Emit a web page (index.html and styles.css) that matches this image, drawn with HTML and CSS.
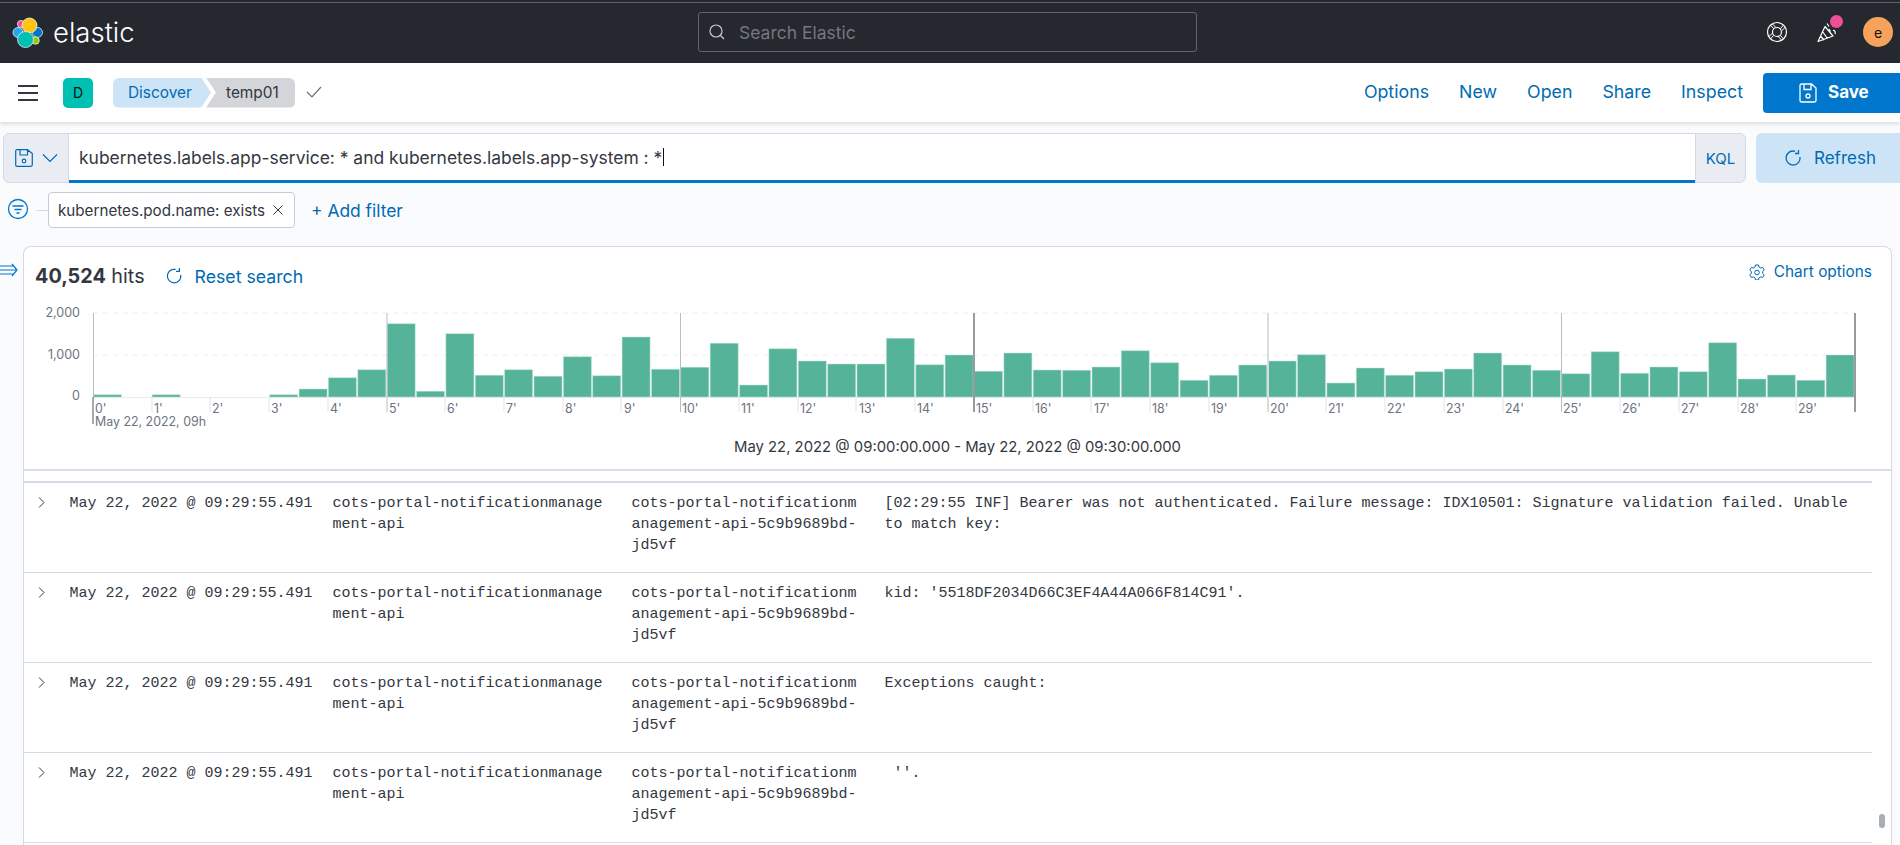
FILE: index.html
```html
<!DOCTYPE html>
<html lang="en">
<head>
<meta charset="utf-8">
<title>Discover - Elastic</title>
<link rel="stylesheet" href="styles.css">
</head>
<body>
<div class="strip"></div>
<header class="topbar">
  <div class="brand">
    <svg class="logo" viewBox="0 0 32 32" width="32" height="32">
      <circle class="l-pink" cx="9" cy="7" r="3.6"/>
      <circle class="l-sky" cx="6" cy="15.5" r="5"/>
      <circle class="l-blue" cx="25.5" cy="15.5" r="5"/>
      <circle class="l-green" cx="23.5" cy="23.5" r="3.8"/>
      <circle class="l-yellow" cx="17.5" cy="8.5" r="7.5"/>
      <circle class="l-teal" cx="13.5" cy="22.5" r="8"/>
    </svg>
    <span class="wordmark">elastic</span>
  </div>
  <div class="search">
    <svg class="search-icon" viewBox="0 0 16 16" width="16" height="16"><circle cx="7" cy="7" r="6"/><path d="M11.5 11.5l3.5 3.5"/></svg>
    <span class="search-text">Search Elastic</span>
  </div>
  <div class="top-icons">
    <svg class="lifebuoy" viewBox="0 0 22 22" width="22" height="22"><circle cx="11" cy="11" r="9.5"/><circle cx="11" cy="11" r="4.5"/><path d="M4.5 4l3.2 3.8M6.5 2.8l3 3.4M17.5 4l-3.2 3.8M19.2 6.5l-3.4 3M4.5 18l3.2-3.8M2.8 15.5l3.4-3M17.5 18l-3.2-3.8M15.5 19.2l-3-3.4"/></svg>
    <span class="cheer">
      <svg viewBox="0 0 22 24" width="22" height="24"><path d="M2 21.5l7-15 8 9.5zM6.5 11.5l5 7M4.5 16l3.5 4M11 3.5l2 3M13 9l1.500 2.500M16 6c2 0 2.500-1 3-2M17 10.500c2-.5 2.500 2 2 3.500"/></svg>
      <span class="cheer-dot"></span>
    </span>
    <span class="avatar">e</span>
  </div>
</header>
<nav class="appbar">
  <span class="burger"><i></i><i></i><i></i></span>
  <span class="tile">D</span>
  <span class="crumb crumb-first">Discover</span>
  <span class="crumb crumb-last">temp01</span>
  <svg class="check" viewBox="0 0 16 12" width="16" height="12"><path d="M1 6l5 5 9-10"/></svg>
  <div class="links">
    <a class="link">Options</a>
    <a class="link">New</a>
    <a class="link">Open</a>
    <a class="link">Share</a>
    <a class="link">Inspect</a>
    <button class="save">
      <svg class="save-icon" viewBox="0 0 18 20" width="18" height="20"><path d="M2.500 1h10l4.500 4v12.500a1.500 1.500 0 0 1-1.500 1.500h-13a1.500 1.500 0 0 1-1.500-1.500v-15a1.500 1.500 0 0 1 1.500-1.500zM5 1v5.500h7V1"/><circle cx="9" cy="13" r="2"/></svg>
      <span class="save-text">Save</span>
    </button>
  </div>
</nav>
<section class="querybar">
  <div class="query">
    <div class="prepend">
      <svg class="q-save" viewBox="0 0 18 18" width="18" height="18"><path d="M2 .7h10.500L17.300 4.500v11.300a1.500 1.500 0 0 1-1.500 1.500H2a1.300 1.300 0 0 1-1.300-1.300V2A1.300 1.300 0 0 1 2 .7zM5 .7v5.300h7.500V.7"/><circle cx="9" cy="12" r="1.800"/></svg>
      <svg class="q-chev" viewBox="0 0 16 10" width="16" height="10"><path d="M1 1.500l7 7 7-7"/></svg>
    </div>
    <div class="input"><span class="q-text">kubernetes.labels.app-service: * and kubernetes.labels.app-system : *</span><span class="caret"></span></div>
    <div class="kql">KQL</div>
  </div>
  <button class="refresh">
    <svg class="refresh-icon" viewBox="0 0 18 18" width="18" height="18"><path d="M11 2.300A7 7 0 1 0 16 8M14.500 1v3.500H11"/></svg>
    Refresh
  </button>
</section>
<section class="filterbar">
  <svg class="filter-icon" viewBox="0 0 22 22" width="22" height="22"><circle cx="11" cy="11" r="9.500"/><path d="M5.500 8h11M7.500 11.500h7M9.500 15h3"/></svg>
  <span class="filter-line"></span>
  <span class="pill">kubernetes.pod.name: exists
    <svg class="pill-x" viewBox="0 0 10 10" width="10" height="10"><path d="M.5.500l9 9M9.500.500l-9 9"/></svg>
  </span>
  <a class="add-filter">+ Add filter</a>
</section>
<svg class="collapse" viewBox="0 0 18 14" width="18" height="14"><path d="M-4 3h17M-4 7h20M-4 11h17M12 1l5 6-5 6"/></svg>
<main class="card">
  <div class="card-head">
    <div class="hits-wrap">
      <span class="hits"><b>40,524</b> hits</span>
      <svg class="reset-icon" viewBox="0 0 16 16" width="18" height="18"><path d="M9.500 2.200A6 6 0 1 0 14 7M12.800 .8v3h-3"/></svg>
      <a class="reset">Reset search</a>
    </div>
    <a class="chart-options">
      <svg class="gear" viewBox="0 0 16 16" width="16" height="16"><path d="M6.500 1h3l.5 2 1.700 1 2-.6 1.500 2.600-1.500 1.500v1.900l1.500 1.500-1.500 2.600-2-.6-1.700 1-.5 2h-3l-.5-2-1.700-1-2 .6L.8 10.900l1.500-1.500V7.500L.8 6l1.500-2.600 2 .6 1.700-1z"/><circle cx="8" cy="8.500" r="2.300"/></svg>
      Chart options
    </a>
  </div>
  <svg class="chart" viewBox="24 300 1867 135" width="1867" height="135">
    <path class="grid" d="M93 313H1855M93 355H1855"/>
    <path class="base" d="M93 397.500H1855"/>
    <path class="ticks" d="M152 397v15M210 397v15M269 397v15M328 397v15M445 397v15M504 397v15M563 397v15M621 397v15M739 397v15M798 397v15M856 397v15M915 397v15M1033 397v15M1091 397v15M1150 397v15M1209 397v15M1326 397v15M1385 397v15M1444 397v15M1503 397v15M1620 397v15M1679 397v15M1738 397v15M1796 397v15"/>
    <path class="bars" d="M93.500 397v-2.300h28v2.300zM152.200 397v-2.300h28v2.300zM269.700 397v-2.300h28v2.300zM299.100 397v-8h28v8zM328.400 397v-19.300h28v19.300zM357.800 397v-27.300h28v27.300zM387.200 397v-73.300h28v73.300zM416.500 397v-5.700h28v5.700zM445.900 397v-63.300h28v63.300zM475.300 397v-21.700h28v21.700zM504.600 397v-27.300h28v27.300zM534 397v-20.700h28v20.700zM563.400 397v-40.300h28v40.300zM592.700 397v-21.300h28v21.300zM622.100 397v-60h28v60zM651.500 397v-27.700h28v27.700zM680.800 397v-29.700h28v29.700zM710.200 397v-53.700h28v53.700zM739.600 397v-12h28v12zM768.900 397v-48.300h28v48.300zM798.300 397v-36h28v36zM827.700 397v-33h28v33zM857 397v-33h28v33zM886.400 397v-58.700h28v58.700zM915.800 397v-32.300h28v32.300zM945.100 397v-42h28v42zM974.500 397v-25.700h28v25.700zM1003.900 397v-44h28v44zM1033.200 397v-27h28v27zM1062.600 397v-26.700h28v26.700zM1092 397v-30h28v30zM1121.300 397v-46.300h28v46.300zM1150.700 397v-34.300h28v34.300zM1180.100 397v-16.700h28v16.700zM1209.400 397v-21.700h28v21.700zM1238.800 397v-32h28v32zM1268.200 397v-36h28v36zM1297.500 397v-42.300h28v42.300zM1326.900 397v-14h28v14zM1356.300 397v-29h28v29zM1385.600 397v-21.700h28v21.700zM1415 397v-25.300h28v25.300zM1444.400 397v-28h28v28zM1473.700 397v-44h28v44zM1503.100 397v-32h28v32zM1532.500 397v-26.700h28v26.700zM1561.800 397v-23.300h28v23.300zM1591.200 397v-45.300h28v45.300zM1620.600 397v-23.700h28v23.700zM1649.900 397v-30h28v30zM1679.300 397v-25.300h28v25.300zM1708.700 397v-54.300h28v54.300zM1738 397v-18h28v18zM1767.400 397v-22h28v22zM1796.800 397v-16.700h28v16.700zM1826.100 397v-42h27.900v42z"/>
    <path class="axis" d="M93.500 313V397"/>
    <path class="major" d="M387 313v99"/>
    <path class="major" d="M680.500 313v99"/>
    <path class="major-strong" d="M974 313v99"/>
    <path class="major-pale" d="M1268 313v99"/>
    <path class="major" d="M1561.500 313v99"/>
    <path class="major-strong" d="M1855 313v99"/>
    <path class="first-tick" d="M93 397v27"/>
    <g class="y-labels">
      <text x="80" y="317">2,000</text>
      <text x="80" y="359">1,000</text>
      <text x="80" y="400">0</text>
    </g>
    <g class="x-labels">
      <text x="95" y="413">0'</text><text x="154" y="413">1'</text><text x="212" y="413">2'</text><text x="271" y="413">3'</text><text x="330" y="413">4'</text><text x="389" y="413">5'</text><text x="447" y="413">6'</text><text x="506" y="413">7'</text><text x="565" y="413">8'</text><text x="624" y="413">9'</text>
      <text x="682" y="413">10'</text><text x="741" y="413">11'</text><text x="800" y="413">12'</text><text x="859" y="413">13'</text><text x="917" y="413">14'</text><text x="976" y="413">15'</text><text x="1035" y="413">16'</text><text x="1094" y="413">17'</text><text x="1152" y="413">18'</text><text x="1211" y="413">19'</text>
      <text x="1270" y="413">20'</text><text x="1328" y="413">21'</text><text x="1387" y="413">22'</text><text x="1446" y="413">23'</text><text x="1505" y="413">24'</text><text x="1563" y="413">25'</text><text x="1622" y="413">26'</text><text x="1681" y="413">27'</text><text x="1740" y="413">28'</text><text x="1798" y="413">29'</text>
      <text x="95" y="426">May 22, 2022, 09h</text>
    </g>
  </svg>
  <div class="range">May 22, 2022 @ 09:00:00.000 - May 22, 2022 @ 09:30:00.000</div>
  <div class="docs">
    <div class="row">
      <svg class="chev" viewBox="0 0 7 11" width="7" height="11"><path d="M1 .5l5 5-5 5"/></svg>
      <div class="cell">May 22, 2022 @ 09:29:55.491</div>
      <div class="cell cell-app">cots-portal-notificationmanagement-api</div>
      <div class="cell cell-pod">cots-portal-notificationmanagement-api-5c9b9689bd-jd5vf</div>
      <div class="cell cell-msg">[02:29:55 INF] Bearer was not authenticated. Failure message: IDX10501: Signature validation failed. Unable to match key:</div>
    </div>
    <div class="row">
      <svg class="chev" viewBox="0 0 7 11" width="7" height="11"><path d="M1 .5l5 5-5 5"/></svg>
      <div class="cell">May 22, 2022 @ 09:29:55.491</div>
      <div class="cell cell-app">cots-portal-notificationmanagement-api</div>
      <div class="cell cell-pod">cots-portal-notificationmanagement-api-5c9b9689bd-jd5vf</div>
      <div class="cell cell-msg">kid: '5518DF2034D66C3EF4A44A066F814C91'.</div>
    </div>
    <div class="row">
      <svg class="chev" viewBox="0 0 7 11" width="7" height="11"><path d="M1 .5l5 5-5 5"/></svg>
      <div class="cell">May 22, 2022 @ 09:29:55.491</div>
      <div class="cell cell-app">cots-portal-notificationmanagement-api</div>
      <div class="cell cell-pod">cots-portal-notificationmanagement-api-5c9b9689bd-jd5vf</div>
      <div class="cell cell-msg">Exceptions caught:</div>
    </div>
    <div class="row">
      <svg class="chev" viewBox="0 0 7 11" width="7" height="11"><path d="M1 .5l5 5-5 5"/></svg>
      <div class="cell">May 22, 2022 @ 09:29:55.491</div>
      <div class="cell cell-app">cots-portal-notificationmanagement-api</div>
      <div class="cell cell-pod">cots-portal-notificationmanagement-api-5c9b9689bd-jd5vf</div>
      <div class="cell cell-msg"> ''.</div>
    </div>
  </div>
  <span class="scroll-thumb"></span>
</main>
</body>
</html>
```

FILE: styles.css
```css
* { box-sizing: border-box; }
html, body { margin: 0; height: 845px; overflow: hidden; }
body {
  position: relative;
  width: 1900px;
  background: #fafbfd;
  font-family: Inter, "Liberation Sans", sans-serif;
  color: #343741;
}
svg { display: block; flex: none; }
svg path, svg circle { fill: none; }

.strip { height: 3px; background: #25282f; border-bottom: 1px solid #62646a; }

.topbar {
  height: 60px;
  background: #25282f;
  display: grid;
  grid-template-columns: 698px 499px 1fr;
  align-items: center;
}
.brand { display: flex; align-items: center; padding-left: 12px; gap: 9px; }
.logo circle { stroke: #fff; stroke-width: .7; }
.logo .l-pink { fill: #f04e98; }
.logo .l-sky { fill: #1ba9f5; }
.logo .l-blue { fill: #0077cc; }
.logo .l-green { fill: #93c90e; }
.logo .l-yellow { fill: #fec514; }
.logo .l-teal { fill: #00bfb3; }
.wordmark { color: #fff; font-size: 27.500px; font-weight: 300; line-height: 1; }

.search {
  height: 40px;
  margin-top: -3px;
  border: 1px solid #62656b;
  border-radius: 3px;
  display: flex;
  align-items: center;
  padding-left: 10px;
  gap: 14px;
}
.search-icon circle, .search-icon path { stroke: #c9ccd1; stroke-width: 1.200; }
.search-text { color: #74777e; font-size: 17.500px; padding-top: 1px; }

.top-icons { display: flex; align-items: center; justify-content: flex-end; padding-right: 7px; margin-top: -2px; }
.lifebuoy { margin-right: 28px; }
.lifebuoy circle, .lifebuoy path { stroke: #fff; stroke-width: 1.200; }
.lifebuoy path { stroke-width: 1; }
.cheer { position: relative; display: block; margin-right: 25px; }
.cheer path { stroke: #fff; stroke-width: 1.200; stroke-linejoin: round; }
.cheer-dot {
  position: absolute;
  top: -5px;
  left: 14px;
  width: 13px;
  height: 13px;
  border-radius: 50%;
  background: #f04e98;
}
.avatar {
  width: 30px;
  height: 30px;
  border-radius: 50%;
  background: #f5a35c;
  color: #111;
  font-size: 14px;
  display: flex;
  align-items: center;
  justify-content: center;
}

.appbar {
  position: relative;
  height: 59px;
  background: #fff;
  box-shadow: 0 2px 4px rgba(52, 55, 65, .16);
  display: flex;
  align-items: center;
}
.burger { width: 20px; margin-left: 18px; display: flex; flex-direction: column; gap: 5px; }
.burger i { display: block; height: 2px; background: #343741; }
.tile {
  width: 30px;
  height: 30px;
  margin-left: 25px;
  border-radius: 5px;
  background: #00bfb3;
  color: #111;
  font-size: 14px;
  display: flex;
  align-items: center;
  justify-content: center;
}
.crumb { height: 30px; display: flex; align-items: center; font-size: 15.400px; }
.crumb-first {
  width: 98px;
  margin-left: 20px;
  padding-left: 15px;
  background: #cce4f5;
  color: #006bb4;
  border-radius: 6px 0 0 6px;
  clip-path: polygon(0 0, 90% 0, 100% 50%, 90% 100%, 0 100%);
}
.crumb-last {
  width: 89px;
  margin-left: -5px;
  padding-left: 20px;
  background: #d3d5d9;
  color: #343741;
  border-radius: 0 6px 6px 0;
  clip-path: polygon(0 0, 100% 0, 100% 100%, 0 100%, 10px 50%);
}
.check { margin: -2px 0 0 11px; }
.check path { stroke: #69707d; stroke-width: 1.200; }
.links { margin-left: auto; display: flex; align-items: center; }
.link { color: #006bb4; font-size: 17.800px; margin: -2px 30px 0 0; }
.link:nth-child(5) { margin-right: 20px; }
.save {
  width: 137px;
  height: 40px;
  border: 0;
  border-radius: 4px 0 0 4px;
  background: #0077cc;
  color: #fff;
  font: 700 17px Inter, "Liberation Sans", sans-serif;
  display: flex;
  align-items: center;
  padding-left: 36px;
  gap: 11px;
}
.save-text { padding-bottom: 2px; }
.save-icon path, .save-icon circle { stroke: #fff; stroke-width: 1.300; }

.querybar { display: flex; margin-top: 11px; padding-left: 3px; height: 50px; }
.query { display: flex; width: 1743px; }
.prepend {
  width: 66px;
  background: #e9edf3;
  border: 1px solid #d3dae6;
  border-radius: 6px 0 0 6px;
  display: flex;
  align-items: center;
  padding-left: 11px;
  gap: 9px;
}
.q-save path, .q-save circle, .q-chev path { stroke: #006bb4; stroke-width: 1.200; }
.input {
  flex: 1;
  background: #fff;
  border-top: 1px solid #d3dae6;
  border-bottom: 3px solid #0077cc;
  display: flex;
  align-items: center;
  padding-left: 10px;
  font-size: 17.450px;
  color: #343741;
}
.caret { width: 1px; height: 18px; margin-left: 1px; background: #111; }
.kql {
  width: 51px;
  background: #e9edf3;
  border: 1px solid #d3dae6;
  border-radius: 0 6px 6px 0;
  color: #006bb4;
  font-size: 15px;
  display: flex;
  align-items: center;
  justify-content: center;
}
.refresh {
  margin-left: 10px;
  width: 144px;
  border: 0;
  border-radius: 6px 0 0 6px;
  background: #cce4f5;
  color: #006bb4;
  font: 400 17px Inter, "Liberation Sans", sans-serif;
  display: flex;
  align-items: center;
  padding-left: 28px;
  gap: 12px;
}
.refresh-icon path { stroke: #006bb4; stroke-width: 1.300; }

.filterbar { display: flex; align-items: center; height: 36px; margin-top: 9px; padding-left: 7px; }
.filter-icon { margin-top: -2px; }
.filter-icon circle, .filter-icon path { stroke: #0077cc; stroke-width: 1.300; }
.filter-line { width: 12px; height: 1px; margin-left: 7px; background: #d3dae6; }
.pill {
  width: 247px;
  height: 36px;
  background: #fff;
  border: 1px solid #c2cbd9;
  border-radius: 4px;
  display: flex;
  align-items: center;
  justify-content: space-between;
  padding: 0 11px 0 9px;
  font-size: 15.200px;
}
.pill-x path { stroke: #343741; stroke-width: 1; }
.add-filter { margin-left: 16px; color: #006bb4; font-size: 17.400px; }

.collapse { position: absolute; left: 0; top: 263px; }
.collapse path { stroke: #0077cc; stroke-width: 1.200; }

.card {
  position: relative;
  width: 1869px;
  height: 600px;
  margin: 18px 0 0 23px;
  background: #fff;
  border: 1px solid #d3dae6;
  border-bottom: 0;
  border-radius: 8px 8px 0 0;
}
.card-head { height: 53px; display: flex; justify-content: space-between; align-items: flex-start; padding: 11px 19px 0 11px; }
.hits-wrap { display: flex; align-items: center; height: 36px; }
.hits { font-size: 19.800px; }
.hits b { font-weight: 700; }
.reset-icon { margin-left: 20px; }
.reset-icon path { stroke: #006bb4; stroke-width: 1.100; }
.reset { margin-left: 12px; color: #006bb4; font-size: 17.700px; }
.chart-options { display: flex; align-items: center; gap: 9px; color: #006bb4; font-size: 15.400px; margin-top: 4px; }
.gear path, .gear circle { stroke: #006bb4; stroke-width: 1; }

.grid { stroke: #eceef2; stroke-dasharray: 5 5; }
.base { stroke: #e9ebef; }
.ticks { stroke: #dfe3ea; }
svg .bars { fill: #54b399; stroke: #bde3d7; stroke-width: .5; }
.axis { stroke: #bdbdbd; }
.major { stroke: #bdbdbd; }
.major-strong { stroke: #9a9a9a; stroke-width: 2; }
.major-pale { stroke: #dcdcdc; stroke-width: 2; }
.first-tick { stroke: #555; }
.y-labels text { text-anchor: end; font-size: 12.500px; fill: #6d7380; }
.x-labels text { font-size: 12.400px; fill: #6d7380; }

.range {
  height: 36px;
  text-align: center;
  font-size: 14.850px;
  padding-top: 3px;
  line-height: 18px;
  border-bottom: 2px solid #d8dde8;
}

.docs { border-top: 2px solid #d3dae6; margin-top: 10px; width: 1848px; }
.row {
  height: 90px;
  border-bottom: 1px solid #d3dae6;
  display: grid;
  grid-template-columns: 45.500px 263px 299px 253px 1fr;
  padding-top: 10px;
  font-family: "Liberation Mono", monospace;
  font-size: 15px;
  line-height: 21px;
  color: #343741;
}
.chev { margin: 4px 0 0 14px; }
.chev path { stroke: #343741; stroke-width: 1; }
.cell { white-space: pre-wrap; }
.cell-app, .cell-pod { word-break: break-all; padding-right: 24px; }
.cell-msg { padding-right: 20px; }
.scroll-thumb {
  position: absolute;
  left: 1855px;
  top: 567px;
  width: 6px;
  height: 14px;
  border-radius: 3px;
  background: #a9adb4;
}
```
